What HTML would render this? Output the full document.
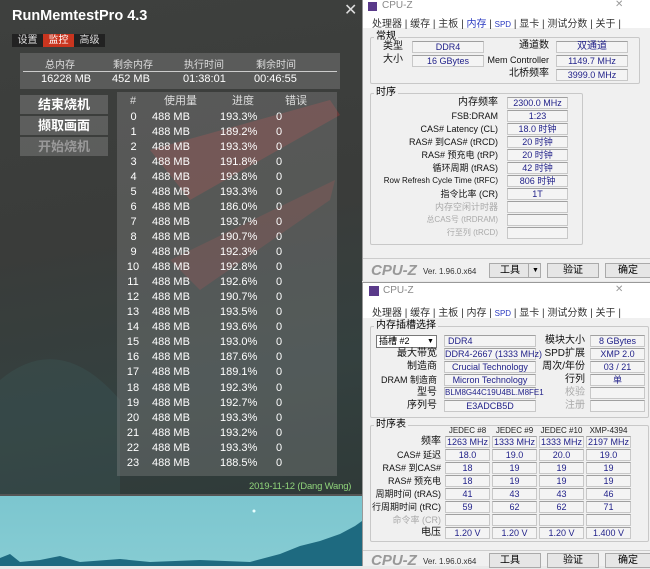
<!DOCTYPE html>
<html><head><meta charset="utf-8"><style>
*{margin:0;padding:0;box-sizing:border-box}
body{width:650px;height:566px;overflow:hidden;position:relative;font-family:"Liberation Sans","Noto Sans CJK SC",sans-serif;background:#e8e8e8}
.a{position:absolute;white-space:nowrap}
#L{left:0;top:0;width:362px;height:496px;background:linear-gradient(170deg,#3e403e 0%,#3a3c3a 45%,#34403f 75%,#2f3a38 100%);overflow:hidden;border-bottom:2px solid #555}
#sky{left:0;top:496px;width:362px;height:70px;background:linear-gradient(#7cc6cf,#86ccd3)}
.w{color:#fff}
.tab{top:34px;height:13px;font-size:10px;color:#ddd;text-align:center;line-height:13px;background:#222}
.btn{left:20px;width:88px;height:19px;background:rgba(120,120,120,.55);color:#fff;font-size:13px;font-weight:bold;text-align:center;line-height:19px}
#tb{left:117px;top:92px;width:220px;height:384px;background:rgba(140,140,140,.35)}
.r{font-size:11px;color:#fff;height:15px;line-height:15px}
.R{position:absolute;left:0;width:650px;height:15px}
.R span{position:absolute}
.cz{background:#f0f0f0;left:362px;width:288px}
.czt{font-size:10px;color:#333}
.f{position:absolute;height:12px;border:1px solid #c8c8c8;border-top-color:#a0a0a0;background:#f4f4f4;font-size:9px;color:#22228a;text-align:center;line-height:10px}
.lb{position:absolute;font-size:10px;color:#111;text-align:right;line-height:12px}
.g{position:absolute;border:1px solid #c8c8c8;border-radius:2px}
.gt{position:absolute;font-size:10px;background:#f0f0f0;padding:0 2px;line-height:12px}
.dis{color:#aaa}
</style></head><body>
<div id="L" class="a">
<svg class="a" style="left:0;top:0" width="362" height="496">
<path d="M150 150 L330 100 L340 115 L190 200Z" fill="rgba(190,60,60,.35)"/>
<path d="M170 260 L335 180 L330 200 L200 290Z" fill="rgba(190,60,60,.25)"/>
<path d="M0 380 Q60 330 120 400 L120 496 L0 496Z" fill="rgba(60,90,90,.35)"/>
</svg>
<div class="a w" style="left:12px;top:8px;font-size:14.5px;font-weight:bold">RunMemtestPro 4.3</div>
<div class="a" style="left:344px;top:0;font-size:16px;color:#ddd">✕</div>
<div class="a tab" style="left:12px;width:31px">设置</div>
<div class="a tab" style="left:43px;width:31px;background:#c9351f;color:#fff">监控</div>
<div class="a tab" style="left:74px;width:31px">高级</div>
<div class="a" style="left:20px;top:53px;width:320px;height:36px;background:rgba(120,120,120,.5)"></div>
<div class="a" style="left:23px;top:71px;width:314px;height:1px;background:#ccc"></div>
<div class="a" style="left:20px;top:56px;width:320px;font-size:10px;color:#ddd">
<span class="a" style="left:25px">总内存</span><span class="a" style="left:93px">剩余内存</span><span class="a" style="left:164px">执行时间</span><span class="a" style="left:236px">剩余时间</span></div>
<div class="a" style="left:20px;top:73px;width:320px;font-size:11px;color:#fff">
<span class="a" style="left:21px">16228 MB</span><span class="a" style="left:92px">452 MB</span><span class="a" style="left:163px">01:38:01</span><span class="a" style="left:234px">00:46:55</span></div>
<div class="a btn" style="top:95px">结束烧机</div>
<div class="a btn" style="top:116px">撷取画面</div>
<div class="a btn" style="top:137px;color:#999">开始烧机</div>
<div id="tb" class="a"></div>
<div class="a r" style="top:94px;left:0;width:362px;color:#ddd"><span class="a" style="left:130px">#</span><span class="a" style="left:164px">使用量</span><span class="a" style="left:232px">进度</span><span class="a" style="left:285px">错误</span></div>
<div class="a" style="left:0;top:110px;width:362px;font-size:11px;color:#fff;line-height:15.05px">
<div class="R" style="top:0"><span style="left:128px;width:11px;text-align:center">0</span><span style="left:152px">488 MB</span><span style="left:220px;width:37px;text-align:right">193.3%</span><span style="left:276px">0</span></div>
<div class="R" style="top:15px"><span style="left:128px;width:11px;text-align:center">1</span><span style="left:152px">488 MB</span><span style="left:220px;width:37px;text-align:right">189.2%</span><span style="left:276px">0</span></div>
<div class="R" style="top:30px"><span style="left:128px;width:11px;text-align:center">2</span><span style="left:152px">488 MB</span><span style="left:220px;width:37px;text-align:right">193.3%</span><span style="left:276px">0</span></div>
<div class="R" style="top:45px"><span style="left:128px;width:11px;text-align:center">3</span><span style="left:152px">488 MB</span><span style="left:220px;width:37px;text-align:right">191.8%</span><span style="left:276px">0</span></div>
<div class="R" style="top:60px"><span style="left:128px;width:11px;text-align:center">4</span><span style="left:152px">488 MB</span><span style="left:220px;width:37px;text-align:right">193.8%</span><span style="left:276px">0</span></div>
<div class="R" style="top:75px"><span style="left:128px;width:11px;text-align:center">5</span><span style="left:152px">488 MB</span><span style="left:220px;width:37px;text-align:right">193.3%</span><span style="left:276px">0</span></div>
<div class="R" style="top:90px"><span style="left:128px;width:11px;text-align:center">6</span><span style="left:152px">488 MB</span><span style="left:220px;width:37px;text-align:right">186.0%</span><span style="left:276px">0</span></div>
<div class="R" style="top:105px"><span style="left:128px;width:11px;text-align:center">7</span><span style="left:152px">488 MB</span><span style="left:220px;width:37px;text-align:right">193.7%</span><span style="left:276px">0</span></div>
<div class="R" style="top:120px"><span style="left:128px;width:11px;text-align:center">8</span><span style="left:152px">488 MB</span><span style="left:220px;width:37px;text-align:right">190.7%</span><span style="left:276px">0</span></div>
<div class="R" style="top:135px"><span style="left:128px;width:11px;text-align:center">9</span><span style="left:152px">488 MB</span><span style="left:220px;width:37px;text-align:right">192.3%</span><span style="left:276px">0</span></div>
<div class="R" style="top:150px"><span style="left:126px;width:14px;text-align:center">10</span><span style="left:152px">488 MB</span><span style="left:220px;width:37px;text-align:right">192.8%</span><span style="left:276px">0</span></div>
<div class="R" style="top:165px"><span style="left:126px;width:14px;text-align:center">11</span><span style="left:152px">488 MB</span><span style="left:220px;width:37px;text-align:right">192.6%</span><span style="left:276px">0</span></div>
<div class="R" style="top:180px"><span style="left:126px;width:14px;text-align:center">12</span><span style="left:152px">488 MB</span><span style="left:220px;width:37px;text-align:right">190.7%</span><span style="left:276px">0</span></div>
<div class="R" style="top:195px"><span style="left:126px;width:14px;text-align:center">13</span><span style="left:152px">488 MB</span><span style="left:220px;width:37px;text-align:right">193.5%</span><span style="left:276px">0</span></div>
<div class="R" style="top:210px"><span style="left:126px;width:14px;text-align:center">14</span><span style="left:152px">488 MB</span><span style="left:220px;width:37px;text-align:right">193.6%</span><span style="left:276px">0</span></div>
<div class="R" style="top:225px"><span style="left:126px;width:14px;text-align:center">15</span><span style="left:152px">488 MB</span><span style="left:220px;width:37px;text-align:right">193.0%</span><span style="left:276px">0</span></div>
<div class="R" style="top:240px"><span style="left:126px;width:14px;text-align:center">16</span><span style="left:152px">488 MB</span><span style="left:220px;width:37px;text-align:right">187.6%</span><span style="left:276px">0</span></div>
<div class="R" style="top:255px"><span style="left:126px;width:14px;text-align:center">17</span><span style="left:152px">488 MB</span><span style="left:220px;width:37px;text-align:right">189.1%</span><span style="left:276px">0</span></div>
<div class="R" style="top:271px"><span style="left:126px;width:14px;text-align:center">18</span><span style="left:152px">488 MB</span><span style="left:220px;width:37px;text-align:right">192.3%</span><span style="left:276px">0</span></div>
<div class="R" style="top:286px"><span style="left:126px;width:14px;text-align:center">19</span><span style="left:152px">488 MB</span><span style="left:220px;width:37px;text-align:right">192.7%</span><span style="left:276px">0</span></div>
<div class="R" style="top:301px"><span style="left:126px;width:14px;text-align:center">20</span><span style="left:152px">488 MB</span><span style="left:220px;width:37px;text-align:right">193.3%</span><span style="left:276px">0</span></div>
<div class="R" style="top:316px"><span style="left:126px;width:14px;text-align:center">21</span><span style="left:152px">488 MB</span><span style="left:220px;width:37px;text-align:right">193.2%</span><span style="left:276px">0</span></div>
<div class="R" style="top:331px"><span style="left:126px;width:14px;text-align:center">22</span><span style="left:152px">488 MB</span><span style="left:220px;width:37px;text-align:right">193.3%</span><span style="left:276px">0</span></div>
<div class="R" style="top:346px"><span style="left:126px;width:14px;text-align:center">23</span><span style="left:152px">488 MB</span><span style="left:220px;width:37px;text-align:right">188.5%</span><span style="left:276px">0</span></div>
</div>
<div class="a" style="left:249px;top:481px;width:96px;font-size:9.5px;color:#8fd27a;text-align:right;letter-spacing:-0.2px">2019-11-12 (Dang Wang)</div>
</div>
<div id="sky" class="a"></div>
<svg class="a" style="left:0;top:496px" width="362" height="70">
<circle cx="254" cy="15" r="1.5" fill="#e8ffff"/>
<path d="M0 70 L0 62 L10 58 L20 66 L40 64 L60 60 L80 66 L120 63 L150 66 L200 64 L250 66 L280 58 L300 50 L320 45 L340 38 L355 30 L362 25 L362 70Z" fill="#1e6a80"/>
</svg>

<!-- CPU-Z top -->
<div class="a cz" style="top:0;height:281px;border-left:1px solid #999">
<div class="a" style="left:0;top:0;width:288px;height:13px;background:#fff"></div>
<div class="a" style="left:5px;top:2px;width:9px;height:9px;background:#5a3a8a"></div>
<div class="a czt" style="left:19px;top:0;color:#888">CPU-Z</div>
<div class="a czt" style="left:252px;top:-1px;color:#999">✕</div>
<div class="a" style="left:0;top:13px;width:288px;height:15px;background:#fff"></div>
<div class="a czt" style="left:9px;top:15px;font-size:10px">处理器 | 缓存 | 主板 | <span style="color:#2a3ac0">内存</span> | <span style="font-size:8px;color:#2a3ac0">SPD</span> | 显卡 | 测试分数 | 关于 |</div>
<div class="g" style="left:7px;top:37px;width:270px;height:47px"></div><div class="gt" style="left:11px;top:31px">常规</div>
<div class="lb" style="left:10px;top:41px;width:30px">类型</div><div class="f" style="left:49px;top:41px;width:72px">DDR4</div>
<div class="lb" style="left:10px;top:54px;width:30px">大小</div><div class="f" style="left:49px;top:55px;width:72px">16 GBytes</div>
<div class="lb" style="left:120px;top:40px;width:66px">通道数</div><div class="f" style="left:193px;top:41px;width:72px;font-size:10px">双通道</div>
<div class="lb" style="left:120px;top:54px;width:66px;font-size:9px">Mem Controller</div><div class="f" style="left:193px;top:55px;width:72px">1149.7 MHz</div>
<div class="lb" style="left:120px;top:68px;width:66px">北桥频率</div><div class="f" style="left:193px;top:69px;width:72px">3999.0 MHz</div>
<div class="g" style="left:7px;top:93px;width:213px;height:152px"></div><div class="gt" style="left:11px;top:87px">时序</div>
<div class="lb" style="left:10px;top:97px;width:125px">内存频率</div><div class="f" style="left:144px;top:97px;width:61px">2300.0 MHz</div>
<div class="lb" style="left:10px;top:110px;width:125px;font-size:9px">FSB:DRAM</div><div class="f" style="left:144px;top:110px;width:61px">1:23</div>
<div class="lb" style="left:10px;top:123px;width:125px;font-size:9px">CAS# Latency (CL)</div><div class="f" style="left:144px;top:123px;width:61px">18.0 时钟</div>
<div class="lb" style="left:10px;top:136px;width:125px;font-size:9px">RAS# 到CAS# (tRCD)</div><div class="f" style="left:144px;top:136px;width:61px">20 时钟</div>
<div class="lb" style="left:10px;top:149px;width:125px;font-size:9px">RAS# 预充电 (tRP)</div><div class="f" style="left:144px;top:149px;width:61px">20 时钟</div>
<div class="lb" style="left:10px;top:162px;width:125px;font-size:9px">循环周期 (tRAS)</div><div class="f" style="left:144px;top:162px;width:61px">42 时钟</div>
<div class="lb" style="left:10px;top:175px;width:125px;font-size:8px">Row Refresh Cycle Time (tRFC)</div><div class="f" style="left:144px;top:175px;width:61px">806 时钟</div>
<div class="lb" style="left:10px;top:188px;width:125px;font-size:9px">指令比率 (CR)</div><div class="f" style="left:144px;top:188px;width:61px">1T</div>
<div class="lb dis" style="left:10px;top:201px;width:125px;font-size:9px">内存空闲计时器</div><div class="f" style="left:144px;top:201px;width:61px"></div>
<div class="lb dis" style="left:10px;top:214px;width:125px;font-size:8px">总CAS号 (tRDRAM)</div><div class="f" style="left:144px;top:214px;width:61px"></div>
<div class="lb dis" style="left:10px;top:227px;width:125px;font-size:8px">行至列 (tRCD)</div><div class="f" style="left:144px;top:227px;width:61px"></div>
<div class="a" style="left:0;top:258px;width:288px;height:1px;background:#ccc"></div>
<div class="a" style="left:8px;top:262px;font-size:15px;font-style:italic;color:#999;font-weight:bold">CPU-Z</div>
<div class="a" style="left:60px;top:267px;font-size:8px;color:#333">Ver. 1.96.0.x64</div>
<div class="a" style="left:126px;top:263px;width:52px;height:15px;border:1px solid #aaa;background:#e6e6e6;font-size:10px;line-height:13px;padding-left:10px">工具<span class="a" style="left:38px;top:0;border-left:1px solid #aaa;padding-left:3px;font-size:7px">▼</span></div>
<div class="a" style="left:184px;top:263px;width:52px;height:15px;border:1px solid #aaa;background:#e6e6e6;font-size:10px;line-height:13px;text-align:center">验证</div>
<div class="a" style="left:242px;top:263px;width:46px;height:15px;border:1px solid #aaa;background:#e6e6e6;font-size:10px;line-height:13px;text-align:center">确定</div>
</div>

<!-- CPU-Z bottom -->
<div class="a cz" style="top:282px;height:284px;border-left:1px solid #999;border-top:1px solid #999">
<div class="a" style="left:0;top:0;width:288px;height:16px;background:#fff"></div>
<div class="a" style="left:6px;top:3px;width:10px;height:10px;background:#5a3a8a"></div>
<div class="a czt" style="left:20px;top:2px;color:#888">CPU-Z</div>
<div class="a czt" style="left:252px;top:1px;color:#999">✕</div>
<div class="a" style="left:0;top:16px;width:288px;height:19px;background:#fff"></div>
<div class="a czt" style="left:9px;top:21px;font-size:10px">处理器 | 缓存 | 主板 | 内存 | <span style="font-size:8px;color:#2a3ac0">SPD</span> | 显卡 | 测试分数 | 关于 |</div>
<div class="g" style="left:7px;top:43px;width:279px;height:92px"></div><div class="gt" style="left:11px;top:37px">内存插槽选择</div>
<div class="a" style="left:13px;top:52px;width:61px;height:13px;border:1px solid #777;background:#fff;font-size:9px;line-height:11px;padding-left:2px">插槽 #2<span class="a" style="left:50px;top:0;font-size:7px">▼</span></div>
<div class="f" style="left:81px;top:52px;width:92px;text-align:left;padding-left:3px">DDR4</div>
<div class="lb" style="left:10px;top:65px;width:64px">最大带宽</div><div class="f" style="left:81px;top:65px;width:92px">DDR4-2667 (1333 MHz)</div>
<div class="lb" style="left:10px;top:78px;width:64px">制造商</div><div class="f" style="left:81px;top:78px;width:92px">Crucial Technology</div>
<div class="lb" style="left:10px;top:91px;width:64px;font-size:9px">DRAM 制造商</div><div class="f" style="left:81px;top:91px;width:92px">Micron Technology</div>
<div class="lb" style="left:10px;top:104px;width:64px">型号</div><div class="f" style="left:81px;top:104px;width:92px;font-size:8px">BLM8G44C19U4BL.M8FE1</div>
<div class="lb" style="left:10px;top:117px;width:64px">序列号</div><div class="f" style="left:81px;top:117px;width:92px">E3ADCB5D</div>
<div class="lb" style="left:170px;top:52px;width:52px">模块大小</div><div class="f" style="left:227px;top:52px;width:55px">8 GBytes</div>
<div class="lb" style="left:170px;top:65px;width:52px">SPD扩展</div><div class="f" style="left:227px;top:65px;width:55px">XMP 2.0</div>
<div class="lb" style="left:170px;top:78px;width:52px">周次/年份</div><div class="f" style="left:227px;top:78px;width:55px">03 / 21</div>
<div class="lb" style="left:170px;top:91px;width:52px">行列</div><div class="f" style="left:227px;top:91px;width:55px">单</div>
<div class="lb dis" style="left:170px;top:104px;width:52px">校验</div><div class="f" style="left:227px;top:104px;width:55px"></div>
<div class="lb dis" style="left:170px;top:117px;width:52px">注册</div><div class="f" style="left:227px;top:117px;width:55px"></div>
<div class="g" style="left:7px;top:142px;width:279px;height:117px"></div><div class="gt" style="left:11px;top:136px">时序表</div>
<div class="a" style="left:0;top:143px;font-size:8px;color:#222"><span class="a" style="left:82px;width:45px;text-align:center">JEDEC #8</span><span class="a" style="left:129px;width:45px;text-align:center">JEDEC #9</span><span class="a" style="left:176px;width:45px;text-align:center">JEDEC #10</span><span class="a" style="left:223px;width:45px;text-align:center">XMP-4394</span></div>
<div class="lb" style="left:0;top:153px;width:78px">频率</div><div class="f" style="left:82px;top:153px;width:45px">1263 MHz</div><div class="f" style="left:129px;top:153px;width:45px">1333 MHz</div><div class="f" style="left:176px;top:153px;width:45px">1333 MHz</div><div class="f" style="left:223px;top:153px;width:45px">2197 MHz</div>
<div class="lb" style="left:0;top:166px;width:78px;font-size:9px">CAS# 延迟</div><div class="f" style="left:82px;top:166px;width:45px">18.0</div><div class="f" style="left:129px;top:166px;width:45px">19.0</div><div class="f" style="left:176px;top:166px;width:45px">20.0</div><div class="f" style="left:223px;top:166px;width:45px">19.0</div>
<div class="lb" style="left:0;top:179px;width:78px;font-size:9px">RAS# 到CAS#</div><div class="f" style="left:82px;top:179px;width:45px">18</div><div class="f" style="left:129px;top:179px;width:45px">19</div><div class="f" style="left:176px;top:179px;width:45px">19</div><div class="f" style="left:223px;top:179px;width:45px">19</div>
<div class="lb" style="left:0;top:192px;width:78px;font-size:9px">RAS# 预充电</div><div class="f" style="left:82px;top:192px;width:45px">18</div><div class="f" style="left:129px;top:192px;width:45px">19</div><div class="f" style="left:176px;top:192px;width:45px">19</div><div class="f" style="left:223px;top:192px;width:45px">19</div>
<div class="lb" style="left:0;top:205px;width:78px;font-size:9px">周期时间 (tRAS)</div><div class="f" style="left:82px;top:205px;width:45px">41</div><div class="f" style="left:129px;top:205px;width:45px">43</div><div class="f" style="left:176px;top:205px;width:45px">43</div><div class="f" style="left:223px;top:205px;width:45px">46</div>
<div class="lb" style="left:0;top:218px;width:78px;font-size:9px">行周期时间 (tRC)</div><div class="f" style="left:82px;top:218px;width:45px">59</div><div class="f" style="left:129px;top:218px;width:45px">62</div><div class="f" style="left:176px;top:218px;width:45px">62</div><div class="f" style="left:223px;top:218px;width:45px">71</div>
<div class="lb dis" style="left:0;top:231px;width:78px;font-size:9px">命令率 (CR)</div><div class="f" style="left:82px;top:231px;width:45px"></div><div class="f" style="left:129px;top:231px;width:45px"></div><div class="f" style="left:176px;top:231px;width:45px"></div><div class="f" style="left:223px;top:231px;width:45px"></div>
<div class="lb" style="left:0;top:244px;width:78px">电压</div><div class="f" style="left:82px;top:244px;width:45px">1.20 V</div><div class="f" style="left:129px;top:244px;width:45px">1.20 V</div><div class="f" style="left:176px;top:244px;width:45px">1.20 V</div><div class="f" style="left:223px;top:244px;width:45px">1.400 V</div>
<div class="a" style="left:0;top:267px;width:288px;height:1px;background:#ccc"></div>
<div class="a" style="left:8px;top:269px;font-size:15px;font-style:italic;color:#999;font-weight:bold">CPU-Z</div>
<div class="a" style="left:60px;top:274px;font-size:8px;color:#333">Ver. 1.96.0.x64</div>
<div class="a" style="left:126px;top:270px;width:52px;height:15px;border:1px solid #aaa;background:#e6e6e6;font-size:10px;line-height:13px;padding-left:10px">工具</div>
<div class="a" style="left:184px;top:270px;width:52px;height:15px;border:1px solid #aaa;background:#e6e6e6;font-size:10px;line-height:13px;text-align:center">验证</div>
<div class="a" style="left:242px;top:270px;width:46px;height:15px;border:1px solid #aaa;background:#e6e6e6;font-size:10px;line-height:13px;text-align:center">确定</div>
</div>
</body></html>
